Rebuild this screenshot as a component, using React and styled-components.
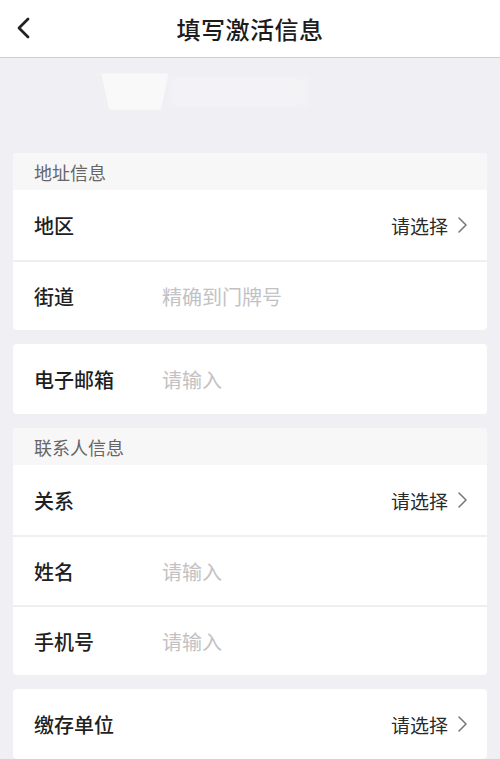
import styled, { createGlobalStyle } from 'styled-components';

const GlobalStyle = createGlobalStyle`
	body {
		margin: 0;
		background: #efeff4;
		font-family: 'Noto Sans CJK SC', 'Noto Sans', sans-serif;
	}
`;

const sections = [
	{
		title: '地址信息',
		rows: [
			{ label: '地区', select: true },
			{ label: '街道', placeholder: '精确到门牌号' },
		],
	},
	{ rows: [{ label: '电子邮箱', placeholder: '请输入' }] },
	{
		title: '联系人信息',
		rows: [
			{ label: '关系', select: true },
			{ label: '姓名', placeholder: '请输入' },
			{ label: '手机号', placeholder: '请输入' },
		],
	},
	{ rows: [{ label: '缴存单位', select: true }] },
];

const Chevron = ({ left }) => (
	<svg width={left ? 16 : 12} height={left ? 22 : 18} viewBox={left ? '0 0 16 22' : '0 0 12 18'}>
		{left ? (
			<path d='M13 2 L4 11 L13 20' fill='none' stroke='#222' strokeWidth='2.8' strokeLinecap='round' strokeLinejoin='round' />
		) : (
			<path d='M3 2 L10 9 L3 16' fill='none' stroke='#7a7a7a' strokeWidth='1.6' strokeLinecap='round' strokeLinejoin='round' />
		)}
	</svg>
);

const App = () => {
	return (
		<Page>
			<GlobalStyle />
			<Header>
				<Back>
					<Chevron left />
				</Back>
				<Title>填写激活信息</Title>
			</Header>
			<Banner>
				<Smudge />
				<Haze />
			</Banner>
			<Sections>
				{sections.map((section, i) => (
					<Card key={i}>
						{section.title ? <SectionTitle>{section.title}</SectionTitle> : null}
						{section.rows.map(row => (
							<Row key={row.label}>
								<Label>{row.label}</Label>
								{row.select ? (
									<Select>
										请选择
										<Chevron />
									</Select>
								) : (
									<Placeholder>{row.placeholder}</Placeholder>
								)}
							</Row>
						))}
					</Card>
				))}
			</Sections>
		</Page>
	);
};
export default App;

const Page = styled.div`
	min-height: 759px;
	background: #efeff4;
`;

const Header = styled.div`
	position: relative;
	height: 57px;
	background: #fff;
	border-bottom: 1px solid #cfcfd3;
	display: flex;
	align-items: center;
	justify-content: center;
`;

const Back = styled.div`
	position: absolute;
	left: 15px;
	top: 17px;
	display: flex;
`;

const Title = styled.div`
	font-size: 24px;
	font-weight: 500;
	color: #1c1c1c;
	letter-spacing: 0.5px;
`;

const Banner = styled.div`
	height: 95px;
	display: flex;
	align-items: flex-start;
	padding: 15px 0 0 101px;
	box-sizing: border-box;
`;

const Smudge = styled.div`
	width: 68px;
	height: 37px;
	background: #f9f9fa;
	clip-path: polygon(0 0, 100% 0, 88% 100%, 12% 100%);
	filter: blur(1px);
`;

const Haze = styled.div`
	width: 140px;
	height: 30px;
	margin-top: 4px;
	background: #f3f3f6;
	filter: blur(3px);
`;

const Sections = styled.div`
	display: flex;
	flex-direction: column;
	gap: 14px;
	padding: 0 13px;
`;

const Card = styled.div`
	background: #fff;
	border-radius: 4px;
	overflow: hidden;
`;

const SectionTitle = styled.div`
	height: 37px;
	padding-left: 21px;
	display: flex;
	align-items: center;
	background: #f7f7f8;
	font-size: 18px;
	color: #666;
`;

const Row = styled.div`
	height: 70px;
	display: flex;
	align-items: center;
	padding: 0 19px 0 21px;
	& + & {
		border-top: 2px solid #efeff2;
		height: 68px;
	}
`;

const Label = styled.div`
	width: 128px;
	font-size: 20px;
	font-weight: 500;
	color: #1f1f1f;
`;

const Placeholder = styled.div`
	font-size: 20px;
	color: #c2c2c4;
`;

const Select = styled.div`
	margin-left: auto;
	display: flex;
	align-items: center;
	gap: 8px;
	font-size: 19px;
	color: #2a2a2a;
`;
